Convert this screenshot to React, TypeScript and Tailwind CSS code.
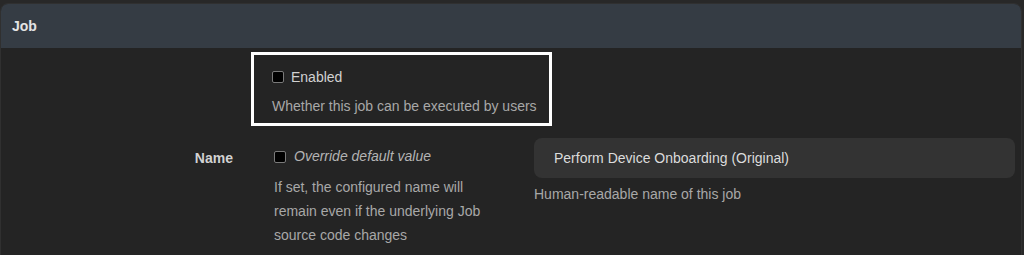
export default function App() {
  return (
    <div
      className="w-[1024px] h-[255px] overflow-hidden bg-[#282828] pt-[3px] pr-[2px]"
      style={{ fontFamily: '"Liberation Sans", Arial, sans-serif' }}
    >
      <div className="h-[260px] rounded-t-[8px] border border-[#303030] bg-[#242424]">
        {/* panel header */}
        <div className="flex h-[44px] items-center rounded-t-[7px] bg-[#353c44] px-[11px] text-[14px] font-bold text-[#e4e4e4]">
          Job
        </div>

        <div className="pt-[4px]">
          {/* Enabled field, highlighted */}
          <div className="flex">
            <div className="w-[250px]" />
            <div className="w-[301px] border-[3px] border-white pl-[18px] pr-[8px] pt-[12px] pb-[7px]">
              <label className="flex h-[20px] items-center gap-[7px] text-[14px] text-[#d2d2d2]">
                <span className="h-[12px] w-[12px] rounded-[2px] border border-[#7a7a7a] bg-black" />
                Enabled
              </label>
              <p className="mt-[9px] whitespace-nowrap text-[14px] leading-[20px] text-[#a8a8a8]">
                Whether this job can be executed by users
              </p>
            </div>
          </div>

          {/* Name field */}
          <div className="mt-[12px] flex">
            <div className="flex h-[40px] w-[250px] items-center justify-end pr-[18px] text-[14px] font-bold text-[#d2d2d2]">
              Name
            </div>
            <div className="w-[283px] pl-[23px] pr-[35px]">
              <label className="flex h-[37px] items-center gap-[8px] text-[14px] italic text-[#b4b4b4]">
                <span className="h-[12px] w-[12px] rounded-[2px] border border-[#7a7a7a] bg-black" />
                Override default value
              </label>
              <p className="text-[14px] leading-[24px] text-[#a8a8a8]">
                If set, the configured name will remain even if the underlying Job source code changes
              </p>
            </div>
            <div className="w-[481px]">
              <div className="flex h-[40px] items-center rounded-[8px] bg-[#333333] px-[20px] text-[14px] text-[#dcdcdc]">
                Perform Device Onboarding (Original)
              </div>
              <p className="mt-[6px] text-[14px] leading-[20px] text-[#a8a8a8]">
                Human-readable name of this job
              </p>
            </div>
          </div>
        </div>
      </div>
    </div>
  );
}
